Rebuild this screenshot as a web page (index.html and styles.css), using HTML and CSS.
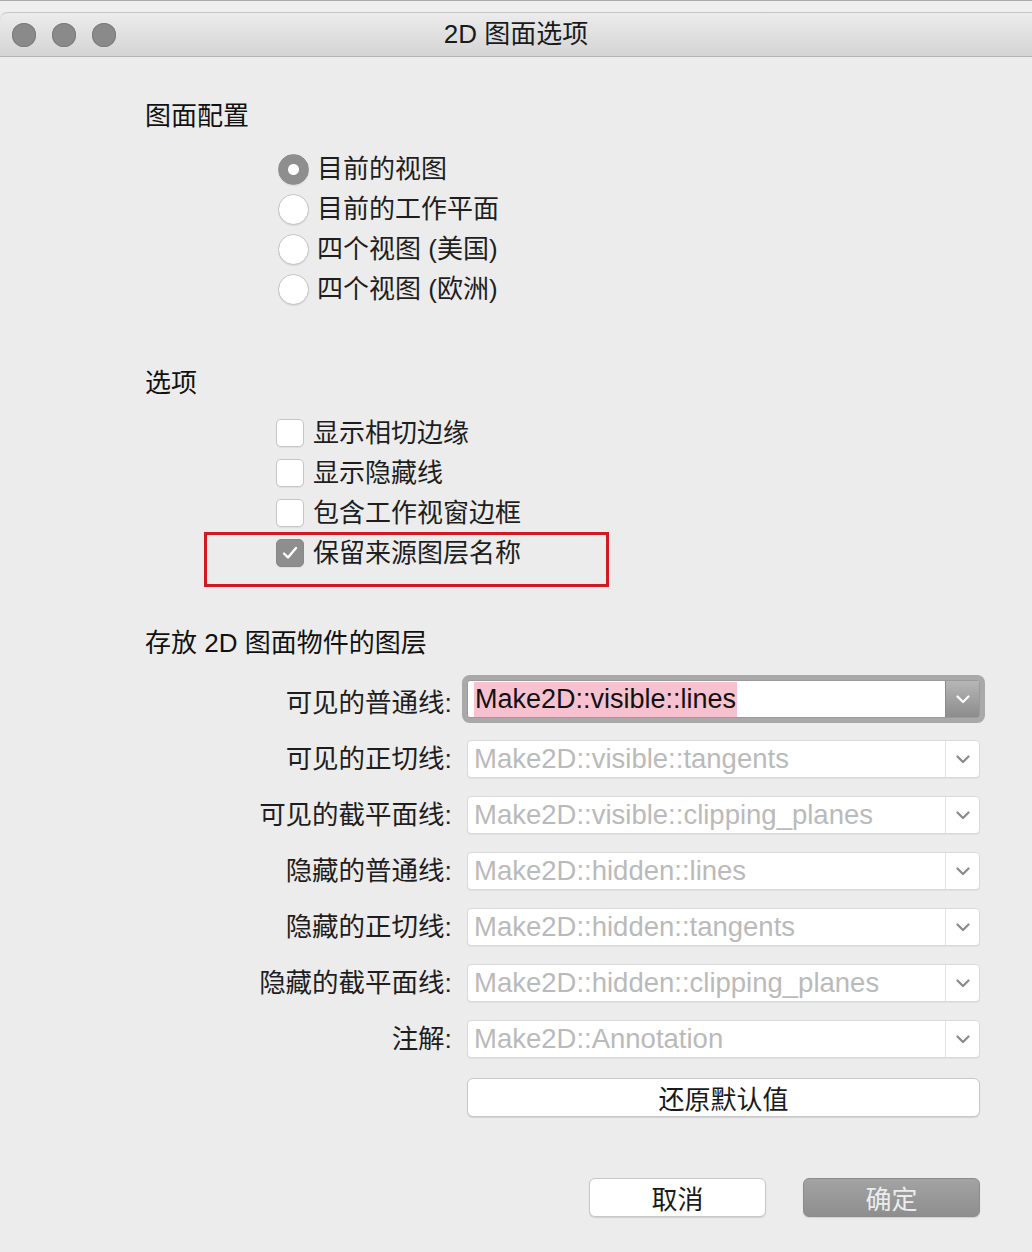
FILE: index.html
```html
<!DOCTYPE html>
<html>
  <head>
    <meta charset="utf-8">
    <title>2D 图面选项</title>
    <link rel="stylesheet" href="styles.css">
  </head>

  <body>
    <div class="ventana">
      <div class="franja"></div>
      <div class="barra-titulo">
        <div class="semaforos">
          <span class="luz"></span>
          <span class="luz"></span>
          <span class="luz"></span>
        </div>
        <div class="titulo">2D 图面选项</div>
      </div>

      <div class="contenido">
        <h3 class="seccion">图面配置</h3>
        <div class="lista-radios">
          <div class="opcion"><span class="radio marcado"></span><span class="texto">目前的视图</span></div>
          <div class="opcion"><span class="radio"></span><span class="texto">目前的工作平面</span></div>
          <div class="opcion"><span class="radio"></span><span class="texto">四个视图 (美国)</span></div>
          <div class="opcion"><span class="radio"></span><span class="texto">四个视图 (欧洲)</span></div>
        </div>

        <h3 class="seccion seccion-opciones">选项</h3>
        <div class="lista-checks">
          <div class="opcion"><span class="check"></span><span class="texto">显示相切边缘</span></div>
          <div class="opcion"><span class="check"></span><span class="texto">显示隐藏线</span></div>
          <div class="opcion"><span class="check"></span><span class="texto">包含工作视窗边框</span></div>
          <div class="opcion resaltada">
            <span class="check marcado">
              <svg width="18" height="16" viewBox="0 0 18 16"><path d="M3 8.5 L7 12.5 L15 3" fill="none" stroke="#fff" stroke-width="2.4" stroke-linecap="round" stroke-linejoin="round"/></svg>
            </span><span class="texto">保留来源图层名称</span>
            <span class="marco-rojo"></span>
          </div>
        </div>

        <h3 class="seccion seccion-capas">存放 2D 图面物件的图层</h3>
        <div class="tabla-capas">
          <div class="fila">
            <label>可见的普通线:</label>
            <div class="selector activo">
              <span class="valor"><span class="seleccion">Make2D::visible::lines</span></span>
              <span class="flecha">
                <svg width="14" height="9" viewBox="0 0 14 9"><path d="M1.5 1.5 L7 7 L12.5 1.5" fill="none" stroke="#fff" stroke-width="2.2" stroke-linecap="round" stroke-linejoin="round"/></svg>
              </span>
            </div>
          </div>
          <div class="fila">
            <label>可见的正切线:</label>
            <div class="selector">
              <span class="valor">Make2D::visible::tangents</span>
              <span class="flecha">
                <svg width="14" height="9" viewBox="0 0 14 9"><path d="M1.5 1.5 L7 7 L12.5 1.5" fill="none" stroke="#8a8a8a" stroke-width="2.2" stroke-linecap="round" stroke-linejoin="round"/></svg>
              </span>
            </div>
          </div>
          <div class="fila">
            <label>可见的截平面线:</label>
            <div class="selector">
              <span class="valor">Make2D::visible::clipping_planes</span>
              <span class="flecha">
                <svg width="14" height="9" viewBox="0 0 14 9"><path d="M1.5 1.5 L7 7 L12.5 1.5" fill="none" stroke="#8a8a8a" stroke-width="2.2" stroke-linecap="round" stroke-linejoin="round"/></svg>
              </span>
            </div>
          </div>
          <div class="fila">
            <label>隐藏的普通线:</label>
            <div class="selector">
              <span class="valor">Make2D::hidden::lines</span>
              <span class="flecha">
                <svg width="14" height="9" viewBox="0 0 14 9"><path d="M1.5 1.5 L7 7 L12.5 1.5" fill="none" stroke="#8a8a8a" stroke-width="2.2" stroke-linecap="round" stroke-linejoin="round"/></svg>
              </span>
            </div>
          </div>
          <div class="fila">
            <label>隐藏的正切线:</label>
            <div class="selector">
              <span class="valor">Make2D::hidden::tangents</span>
              <span class="flecha">
                <svg width="14" height="9" viewBox="0 0 14 9"><path d="M1.5 1.5 L7 7 L12.5 1.5" fill="none" stroke="#8a8a8a" stroke-width="2.2" stroke-linecap="round" stroke-linejoin="round"/></svg>
              </span>
            </div>
          </div>
          <div class="fila">
            <label>隐藏的截平面线:</label>
            <div class="selector">
              <span class="valor">Make2D::hidden::clipping_planes</span>
              <span class="flecha">
                <svg width="14" height="9" viewBox="0 0 14 9"><path d="M1.5 1.5 L7 7 L12.5 1.5" fill="none" stroke="#8a8a8a" stroke-width="2.2" stroke-linecap="round" stroke-linejoin="round"/></svg>
              </span>
            </div>
          </div>
          <div class="fila">
            <label>注解:</label>
            <div class="selector">
              <span class="valor">Make2D::Annotation</span>
              <span class="flecha">
                <svg width="14" height="9" viewBox="0 0 14 9"><path d="M1.5 1.5 L7 7 L12.5 1.5" fill="none" stroke="#8a8a8a" stroke-width="2.2" stroke-linecap="round" stroke-linejoin="round"/></svg>
              </span>
            </div>
          </div>
        </div>

        <div class="fila-reset">
          <button class="boton boton-reset">还原默认值</button>
        </div>

        <div class="pie">
          <button class="boton boton-cancelar">取消</button>
          <button class="boton boton-ok">确定</button>
        </div>
      </div>
    </div>
  </body>
</html>
```

FILE: styles.css
```css
body {
  margin: 0;
  background-color: #ececec;
  font-family: "Liberation Sans", "Noto Sans CJK SC", sans-serif;
  color: #1e1e1e;
}
.ventana {
  width: 1032px;
  height: 1252px;
  background-color: #ececec;
}
.franja {
  height: 11px;
  border-top: 1px solid #a9a9a9;
  background-color: #efefef;
}
.barra-titulo {
  position: relative;
  height: 43px;
  border-top: 1px solid #c6c6c6;
  border-bottom: 1px solid #b4b4b4;
  border-top-left-radius: 8px;
  background: linear-gradient(#ececec, #d4d4d4);
  display: flex;
  align-items: center;
  justify-content: center;
}
.semaforos {
  position: absolute;
  left: 12px;
  top: 10px;
  display: flex;
  gap: 16px;
}
.luz {
  width: 24px;
  height: 24px;
  border-radius: 50%;
  background-color: #8a8a8a;
  box-shadow: inset 0 0 0 1px #7c7c7c;
}
.titulo {
  font-size: 26px;
  line-height: 43px;
  color: #1a1a1a;
}
.contenido {
  padding: 39px 52px 0 145px;
}
.seccion {
  margin: 0;
  font-weight: normal;
  font-size: 26px;
  line-height: 40px;
  padding-bottom: 3px;
  margin-bottom: -3px;
  color: #111;
}
.lista-radios {
  margin: 13px 0 0 133px;
}
.seccion-opciones {
  margin-top: 54px;
}
.lista-checks {
  margin: 10px 0 0 131px;
}
.seccion-capas {
  margin-top: 50px;
}
.opcion {
  position: relative;
  display: flex;
  align-items: center;
  height: 40px;
  font-size: 26px;
}
.texto {
  padding-bottom: 5px;
}
.radio {
  width: 29px;
  height: 29px;
  margin-right: 8px;
  border-radius: 50%;
  border: 1px solid #c4c4c4;
  background-color: #fff;
  box-shadow: 0 1px 1px rgba(0, 0, 0, 0.08);
}
.radio.marcado {
  border-color: #8c8c8c;
  background: radial-gradient(circle, #fff 0, #fff 5px, #8e8e8e 6px);
}
.check {
  width: 26px;
  height: 26px;
  margin-right: 9px;
  border-radius: 5px;
  border: 1px solid #c6c6c6;
  background-color: #fff;
  box-shadow: 0 1px 1px rgba(0, 0, 0, 0.06);
  display: flex;
  align-items: center;
  justify-content: center;
}
.check.marcado {
  border-color: #888;
  background-color: #8e8e8e;
}
.marco-rojo {
  position: absolute;
  left: -72px;
  top: -1px;
  width: 399px;
  height: 49px;
  border: 3px solid #d11a20;
}
.tabla-capas {
  margin-top: 12px;
}
.fila {
  display: flex;
  align-items: center;
  height: 56px;
}
.fila label {
  width: 307px;
  margin-right: 15px;
  padding-bottom: 5px;
  text-align: right;
  font-size: 26.5px;
  color: #1e1e1e;
}
.selector {
  flex: 1;
  height: 36px;
  display: flex;
  border: 1px solid #dadada;
  border-radius: 4px;
  background-color: #fff;
  box-shadow: 0 1px 1px rgba(0, 0, 0, 0.05);
}
.selector .valor {
  flex: 1;
  padding-left: 6px;
  font-size: 27.5px;
  line-height: 36px;
  color: #bababa;
  white-space: nowrap;
  overflow: hidden;
}
.selector .flecha {
  width: 33px;
  border-left: 1px solid #e0e0e0;
  display: flex;
  align-items: center;
  justify-content: center;
}
.selector.activo {
  margin-bottom: 8px;
  border-color: #9a9a9a;
  box-shadow: 0 0 0 5px #a9a9a9;
  border-radius: 3px;
}
.selector.activo .valor {
  color: #111;
  font-size: 27px;
}
.selector.activo .flecha {
  border-left-color: #8a8a8a;
  background: linear-gradient(#b6b6b6, #8c8c8c);
}
.seleccion {
  background-color: #f8c1d0;
  padding: 2px 1px 3px 1px;
}
.fila-reset {
  margin: 11px 0 0 322px;
}
.boton {
  height: 39px;
  border: 1px solid #c8c8c8;
  border-radius: 6px;
  background-color: #fff;
  font-family: "Liberation Sans", "Noto Sans CJK SC", sans-serif;
  font-size: 26px;
  color: #1a1a1a;
  box-shadow: 0 1px 1px rgba(0, 0, 0, 0.12);
  padding: 0 0 4px 0;
}
.boton-reset {
  width: 513px;
}
.pie {
  margin-top: 61px;
  display: flex;
  justify-content: flex-end;
  gap: 37px;
}
.boton-cancelar {
  width: 177px;
}
.boton-ok {
  width: 177px;
  border-color: #8c8c8c;
  background: linear-gradient(#a3a3a3, #8e8e8e);
  color: #ececec;
}
```
